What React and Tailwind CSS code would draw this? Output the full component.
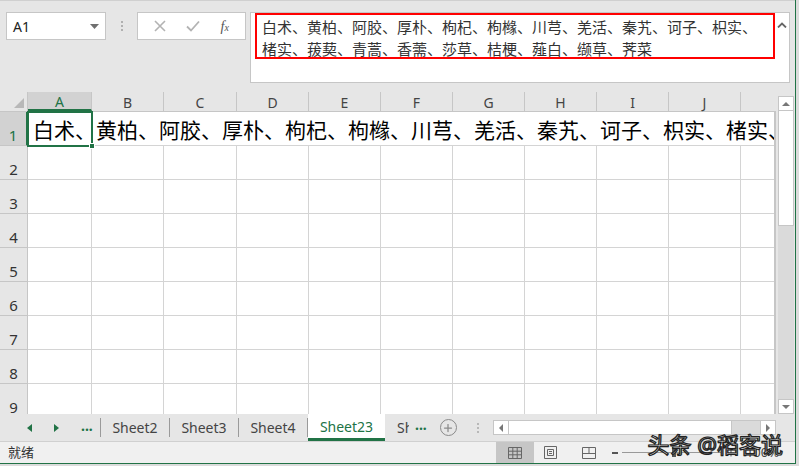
import { Plus } from "lucide-react";

const cjk = "font-['Noto_Sans','Noto_Sans_CJK_SC',sans-serif]";

const cols = [
  { k: "A", w: "w-[64px]" },
  { k: "B", w: "w-[72px]" },
  { k: "C", w: "w-[73px]" },
  { k: "D", w: "w-[72px]" },
  { k: "E", w: "w-[72px]" },
  { k: "F", w: "w-[72px]" },
  { k: "G", w: "w-[72px]" },
  { k: "H", w: "w-[72px]" },
  { k: "I", w: "w-[72px]" },
  { k: "J", w: "w-[72px]" },
  { k: "", w: "w-[72px]" },
];

const rows = [2, 3, 4, 5, 6, 7, 8, 9];

function TopBar() {
  return (
    <div className="h-[92px] shrink-0 flex items-start pt-[11px] pl-[6px] border-t border-[#d0d0d0]">
      {/* name box */}
      <div className="w-[100px] h-[28px] bg-white border border-[#c6c6c6] flex items-center justify-between pl-[6px] pr-[6px]">
        <span className="text-[14px] text-[#222]">A1</span>
        <svg width="9" height="5" viewBox="0 0 9 5">
          <path d="M0 0h9L4.5 5z" fill="#6f6f6f" />
        </svg>
      </div>
      {/* dots */}
      <div className="w-[31px] h-[28px] flex flex-col items-center justify-center gap-[2px]">
        <span className="w-[2px] h-[2px] bg-[#b0b0b0]" />
        <span className="w-[2px] h-[2px] bg-[#b0b0b0]" />
        <span className="w-[2px] h-[2px] bg-[#b0b0b0]" />
      </div>
      {/* buttons */}
      <div className="w-[109px] h-[28px] bg-white border border-[#c6c6c6] flex items-center justify-around px-[6px]">
        <svg width="12" height="12" viewBox="0 0 12 12">
          <path d="M1 1L11 11M11 1L1 11" stroke="#b3b3b3" strokeWidth="1.6" />
        </svg>
        <svg width="14" height="12" viewBox="0 0 14 12">
          <path d="M1 6.5L5 10.5L13 1.5" stroke="#b3b3b3" strokeWidth="1.8" fill="none" />
        </svg>
        <span className="text-[14px] italic text-[#555] font-['Liberation_Serif',serif]">
          f<span className="text-[10px]">x</span>
        </span>
      </div>
      {/* formula bar */}
      <div className="ml-[4px] w-[540px] h-[71px] bg-white border border-[#c6c6c6] flex items-start pl-[4px] pt-0">
        <div
          className={`mt-0 w-[520px] h-[46px] border-2 border-[#ff0000] pl-[5px] pt-[1px] text-[15px] leading-[22px] text-[#333] ${cjk} whitespace-nowrap`}
        >
          白术、黄柏、阿胶、厚朴、枸杞、枸橼、川芎、羌活、秦艽、诃子、枳实、
          <br />
          楮实、菝葜、青蒿、香薷、莎草、桔梗、薤白、缬草、荠菜
        </div>
        <div className="flex-1 flex justify-center pt-[9px]">
          <svg width="10" height="6" viewBox="0 0 10 6">
            <path d="M1 5.5L5 1.5L9 5.5" stroke="#666" strokeWidth="1.8" fill="none" />
          </svg>
        </div>
      </div>
    </div>
  );
}

function Grid() {
  return (
    <div className="h-[322px] shrink-0 flex">
      <div className="w-[776px] overflow-hidden bg-white flex flex-col relative">
        {/* header row */}
        <div className="h-[20px] flex shrink-0 bg-[#e6e6e6] border-b border-[#c6c6c6]">
          <div className="w-[28px] shrink-0 flex items-end justify-end pr-[3px] pb-[3px] border-r border-[#c6c6c6]">
            <svg width="10" height="10" viewBox="0 0 10 10">
              <path d="M10 0V10H0z" fill="#b8b8b8" />
            </svg>
          </div>
          {cols.map((c) => (
            <div
              key={c.w + c.k}
              className={`${c.w} shrink-0 flex items-center justify-center pt-[2px] text-[14px] border-r border-[#c6c6c6] ${
                c.k === "A"
                  ? "bg-[#d2d2d2] text-[#217346] border-b-2 border-b-[#217346]"
                  : "text-[#444]"
              }`}
            >
              {c.k}
            </div>
          ))}
        </div>
        {/* row 1 */}
        <div className="h-[34px] flex shrink-0">
          <div className="w-[28px] shrink-0 bg-[#d2d2d2] border-r-2 border-[#217346] border-b border-b-[#c6c6c6] flex items-end justify-center pb-[2px] text-[15px] leading-none text-[#217346]">
            1
          </div>
          <div
            className={`flex-1 border-b border-[#d4d4d4] flex items-center pl-[5px] pt-[4px] text-[21px] leading-none text-black whitespace-nowrap ${cjk}`}
          >
            白术、黄柏、阿胶、厚朴、枸杞、枸橼、川芎、羌活、秦艽、诃子、枳实、楮实、菝葜、青蒿、香薷
          </div>
        </div>
        {/* other rows */}
        {rows.map((r) => (
          <div key={r} className="h-[34px] flex shrink-0">
            <div className="w-[28px] shrink-0 bg-[#e6e6e6] border-r border-[#c6c6c6] border-b border-b-[#c6c6c6] flex items-end justify-center pb-[2px] text-[15px] leading-none text-[#333]">
              {r}
            </div>
            {cols.map((c) => (
              <div
                key={c.w + c.k}
                className={`${c.w} shrink-0 border-r border-b border-[#d4d4d4]`}
              />
            ))}
          </div>
        ))}
        {/* selection */}
        <div className="absolute left-[27px] top-[19px] w-[66px] h-[36px] border-2 border-[#217346]">
          <div className="absolute right-[-4px] bottom-[-4px] w-[6px] h-[6px] bg-[#217346] border border-white" />
        </div>
        <div className="absolute right-0 top-[20px] bottom-0 w-[2px] bg-[#c6c6c6]" />
      </div>
      {/* vertical scrollbar */}
      <div className="w-[19px] bg-[#e6e6e6] flex flex-col items-center pt-[4px] pb-[0px]">
        <div className="w-[16px] flex-1 bg-[#dadada] flex flex-col">
          <div className="h-[15px] bg-white border border-[#c6c6c6] flex items-center justify-center">
            <svg width="8" height="4" viewBox="0 0 8 4">
              <path d="M0 4L4 0L8 4z" fill="#777" />
            </svg>
          </div>
          <div className="h-[115px] bg-white border border-[#c6c6c6] border-t-0" />
          <div className="flex-1" />
          <div className="h-[15px] bg-white border border-[#c6c6c6] flex items-center justify-center">
            <svg width="8" height="4" viewBox="0 0 8 4">
              <path d="M0 0L8 0L4 4z" fill="#777" />
            </svg>
          </div>
        </div>
      </div>
    </div>
  );
}

function Tabs() {
  const tabs = ["Sheet2", "Sheet3", "Sheet4"];
  return (
    <div className="h-[28px] shrink-0 flex items-stretch border-b border-[#d0d0d0] relative">
      <div className="w-[100px] shrink-0 flex items-center pl-[27px] gap-[22px]">
        <svg width="5" height="8" viewBox="0 0 5 8">
          <path d="M5 0V8L0 4z" fill="#217346" />
        </svg>
        <svg width="5" height="8" viewBox="0 0 5 8">
          <path d="M0 0V8L5 4z" fill="#217346" />
        </svg>
        <span className="text-[14px] font-bold text-[#217346] leading-none -mt-[4px]">...</span>
      </div>
      <div className="w-px my-[4px] bg-[#9a9a9a]" />
      {tabs.map((t) => (
        <div key={t} className="flex items-stretch">
          <div className="w-[68px] flex items-center justify-center text-[14px] text-[#444]">{t}</div>
          <div className="w-px my-[4px] bg-[#9a9a9a]" />
        </div>
      ))}
      <div className="w-[77px] bg-white border-b-[3px] border-[#217346] flex items-center justify-center text-[14px] text-[#217346]">
        Sheet23
      </div>
      <div className="w-[24px] overflow-hidden flex items-center pl-[12px] text-[14px] text-[#444] whitespace-nowrap">
        Sheet5
      </div>
      <span className="ml-[6px] self-center text-[14px] font-bold text-[#217346] leading-none -mt-[6px]">...</span>
      <div className="ml-[13px] self-center w-[17px] h-[17px] rounded-full border-[1.5px] border-[#8a8a8a] flex items-center justify-center">
        <Plus size={12} strokeWidth={2.5} color="#8a8a8a" />
      </div>
      <div className="ml-[20px] self-center flex flex-col gap-[2px]">
        <span className="w-[2px] h-[2px] bg-[#b8b8b8]" />
        <span className="w-[2px] h-[2px] bg-[#b8b8b8]" />
        <span className="w-[2px] h-[2px] bg-[#b8b8b8]" />
      </div>
      {/* horizontal scrollbar */}
      <div className="ml-[14px] self-center w-[283px] h-[15px] flex bg-[#dadada] border border-[#c6c6c6]">
        <div className="w-[15px] bg-white border-r border-[#c6c6c6] flex items-center justify-center">
          <svg width="4" height="8" viewBox="0 0 4 8">
            <path d="M4 0V8L0 4z" fill="#777" />
          </svg>
        </div>
        <div className="w-[223px] bg-white border-r border-[#c6c6c6]" />
        <div className="flex-1" />
        <div className="w-[15px] bg-white border-l border-[#c6c6c6] flex items-center justify-center">
          <svg width="4" height="8" viewBox="0 0 4 8">
            <path d="M0 0V8L4 4z" fill="#777" />
          </svg>
        </div>
      </div>
    </div>
  );
}

function StatusBar() {
  return (
    <div className="h-[21px] shrink-0 bg-[#f0f0f0] flex items-stretch relative">
      <span className={`pl-[8px] self-center text-[13px] text-[#333] ${cjk}`}>就绪</span>
      <div className="ml-auto flex items-stretch pr-[16px]">
        <div className="w-[38px] bg-[#c6c6c6] flex items-center justify-center">
          <svg width="14" height="12" viewBox="0 0 14 12">
            <path d="M0.5 0.5H13.5V11.5H0.5z M0.5 4.2H13.5 M0.5 7.8H13.5 M4.8 0.5V11.5 M9.2 0.5V11.5" stroke="#666" fill="none" />
          </svg>
        </div>
        <div className="w-[38px] flex items-center justify-center ml-[-2px]">
          <svg width="13" height="13" viewBox="0 0 13 13">
            <path d="M0.5 0.5H12.5V12.5H0.5z M3.5 3.5H9.5V9.5H3.5z M5 5.5H8 M5 7.5H8" stroke="#666" fill="none" />
          </svg>
        </div>
        <div className="w-[38px] flex items-center justify-center">
          <svg width="14" height="12" viewBox="0 0 14 12">
            <path d="M0.5 0.5H13.5V11.5H0.5z M7 0.5V6.5 M0.5 6.5H13.5" stroke="#666" fill="none" />
          </svg>
        </div>
        <div className="flex items-center ml-[4px]">
          <span className="w-[6px] h-[2px] bg-[#555]" />
          <div className="relative w-[100px] h-[1px] bg-[#999] mx-[4px]">
            <div className="absolute left-[50px] top-[-5px] w-[4px] h-[10px] bg-[#555]" />
          </div>
          <Plus size={10} strokeWidth={2.5} color="#555" />
          <span className="ml-[10px] text-[13px] text-[#444]">100%</span>
        </div>
      </div>
      {/* watermark */}
      <div
        className={`absolute right-[12px] bottom-[8px] text-[22px] leading-none text-white ${cjk} [-webkit-text-stroke:1.2px_#222] [text-shadow:0_0_1px_#000]`}
      >
        头条 @稻客说
      </div>
    </div>
  );
}

export default function App() {
  return (
    <div className="w-[799px] h-[466px] bg-[#dcdcdc] overflow-hidden font-['Noto_Sans','Liberation_Sans','Noto_Sans_CJK_SC',sans-serif]">
      <div className="w-[796px] h-[464px] flex flex-col bg-[#e6e6e6] border-r border-b border-[#217346]">
        <TopBar />
        <Grid />
        <Tabs />
        <StatusBar />
      </div>
    </div>
  );
}
